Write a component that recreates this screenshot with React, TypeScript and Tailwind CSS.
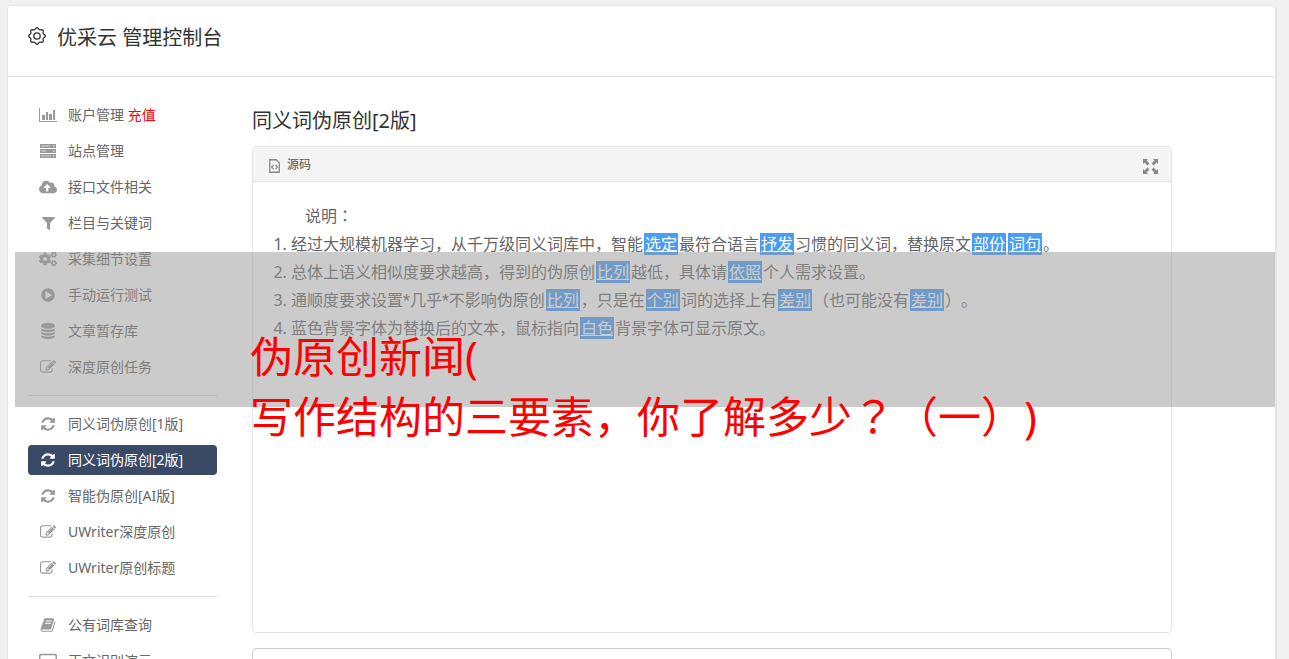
import type { ReactNode } from "react";
import { FaCloudUploadAlt, FaCogs, FaFilter, FaPlayCircle } from "react-icons/fa";

function Glyph({ d }: { d: string }) {
  return (
    <svg viewBox="0 0 1792 1792" className="size-4" fill="currentColor" aria-hidden="true">
      <path d={d} />
    </svg>
  );
}

const refresh = (
  <Glyph d="M1639 1056q0 5-1 7-64 268-268 434.5t-478 166.5q-146 0-282.5-55t-243.5-157l-129 129q-19 19-45 19t-45-19-19-45v-448q0-26 19-45t45-19h448q26 0 45 19t19 45-19 45l-137 137q71 66 161 102t187 36q134 0 250-65t186-179q11-17 53-117 8-23 30-23h192q13 0 22.5 9.5t9.5 22.5zm25-800v448q0 26-19 45t-45 19h-448q-26 0-45-19t-19-45 19-45l138-138q-148-137-349-137-134 0-250 65t-186 179q-11 17-53 117-8 23-30 23h-199q-13 0-22.5-9.5t-9.5-22.5v-7q65-268 270-434.5t480-166.5q146 0 284 55.5t245 156.5l130-129q19-19 45-19t45 19 19 45z" />
);

const edit = (
  <Glyph d="M888 1184l116-116-152-152-116 116v56h96v96h56zm440-720q-16-16-33 1l-350 350q-17 17-1 33t33-1l350-350q17-17 1-33zm80 594v190q0 119-84.5 203.5t-203.5 84.5h-832q-119 0-203.5-84.5t-84.5-203.5v-832q0-119 84.5-203.5t203.5-84.5h832q63 0 117 25 15 7 18 23 3 17-9 29l-49 49q-14 14-32 8-23-6-45-6h-832q-66 0-113 47t-47 113v832q0 66 47 113t113 47h832q66 0 113-47t47-113v-126q0-13 9-22l64-64q15-15 35-7t20 29zm-96-738l288 288-672 672h-288v-288zm444 132l-92 92-288-288 92-92q28-28 68-28t68 28l152 152q28 28 28 68t-28 68z" />
);

const database = (
  <Glyph d="M896 768q237 0 443-43t325-127v170q0 69-103 128t-280 93.5-385 34.5-385-34.5-280-93.5-103-128v-170q119 84 325 127t443 43zm0 768q237 0 443-43t325-127v170q0 69-103 128t-280 93.5-385 34.5-385-34.5-280-93.5-103-128v-170q119 84 325 127t443 43zm0-384q237 0 443-43t325-127v170q0 69-103 128t-280 93.5-385 34.5-385-34.5-280-93.5-103-128v-170q119 84 325 127t443 43zm0-1152q208 0 385 34.5t280 93.5 103 128v128q0 69-103 128t-280 93.5-385 34.5-385-34.5-280-93.5-103-128v-128q0-69 103-128t280-93.5 385-34.5z" />
);

const book = (
  <Glyph d="M1703 478q40 57 18 129l-275 906q-19 64-76.5 107.5t-122.5 43.5h-923q-77 0-148.5-53.5t-99.5-131.5q-24-67-2-127 0-4 3-27t4-37q1-8-3-21.5t-3-19.5q2-11 8-21t16.5-23.5 16.5-23.5q23-38 45-91.5t30-91.5q3-10 .5-30t-.5-28q3-11 17-28t17-23q21-36 42-92t25-90q1-9-2.5-32t.5-28q4-13 22-30.5t22-22.5q19-26 42.5-84.5t27.5-96.5q1-8-3-25.5t-2-26.5q2-8 9-18t18-23 17-21q8-12 16.5-30.5t15-35 16-36 19.5-32 26.5-23.5 36-11.5 47.5 5.5l-1 3q38-9 51-9h761q74 0 114 56t18 130l-274 906q-36 119-71.5 153.5t-128.5 34.5h-869q-27 0-38 15-11 16-1 43 24 70 144 70h923q29 0 56-15.5t35-41.5l300-987q7-22 5-57 38 15 59 43zm-1064 2q-4 13 2 22.5t20 9.5h608q13 0 25.5-9.5t16.5-22.5l21-64q4-13-2-22.5t-20-9.5h-608q-13 0-25.5 9.5t-16.5 22.5zm-83 256q-4 13 2 22.5t20 9.5h608q13 0 25.5-9.5t16.5-22.5l21-64q4-13-2-22.5t-20-9.5h-608q-13 0-25.5 9.5t-16.5 22.5z" />
);

const chart = (
  <svg viewBox="0 0 18 16" className="h-4 w-[18px]" fill="currentColor" aria-hidden="true">
    <path d="M0 1h1v13h17v1H0zM3 8h3v5H3zM7 5h2v8H7zM10 7h3v6h-3zM14 3h2v10h-2z" />
  </svg>
);

const server = (
  <svg viewBox="0 0 16 14" className="h-[14px] w-4" aria-hidden="true">
    <path d="M0 0h16v4H0zM0 5h16v4H0zM0 10h16v4H0z" fill="currentColor" />
    <path d="M1 1.5h9v1H1zM1 6.5h5v1H1zM1 11.5h10v1H1z" fill="#d8d8d8" />
    <path d="M13 1.5h1.5v1H13zM13 6.5h1.5v1H13zM13 11.5h1.5v1H13z" fill="#fff" />
  </svg>
);

const screen = (
  <svg viewBox="0 0 18 16" className="h-4 w-[18px]" fill="none" stroke="currentColor" aria-hidden="true">
    <rect x="0.75" y="1.5" width="16.5" height="11" rx="1.2" strokeWidth="1.5" />
    <path d="M5 15h8" strokeWidth="1.5" />
  </svg>
);

// 八瓣齿轮轮廓
const gearPoints = Array.from({ length: 96 }, (_, i) => {
  const a = (i / 96) * Math.PI * 2;
  const r = 7.5 + 0.8 * Math.cos(8 * a);
  return `${(9 + r * Math.cos(a)).toFixed(2)},${(9 + r * Math.sin(a)).toFixed(2)}`;
}).join(" ");

type Item = { icon: ReactNode; label: string; extra?: string; active?: boolean };

const groups: Item[][] = [
  [
    { icon: chart, label: "账户管理", extra: "充值" },
    { icon: server, label: "站点管理" },
    { icon: <FaCloudUploadAlt className="size-[18px]" />, label: "接口文件相关" },
    { icon: <FaFilter className="size-[13px]" />, label: "栏目与关键词" },
    { icon: <FaCogs className="size-[18px]" />, label: "采集细节设置" },
    { icon: <FaPlayCircle className="size-[14px]" />, label: "手动运行测试" },
    { icon: database, label: "文章暂存库" },
    { icon: edit, label: "深度原创任务" },
  ],
  [
    { icon: refresh, label: "同义词伪原创[1版]" },
    { icon: refresh, label: "同义词伪原创[2版]", active: true },
    { icon: refresh, label: "智能伪原创[AI版]" },
    { icon: edit, label: "UWriter深度原创" },
    { icon: edit, label: "UWriter原创标题" },
  ],
  [
    { icon: book, label: "公有词库查询" },
    { icon: screen, label: "正文识别演示" },
  ],
];

function MenuItem({ icon, label, extra, active }: Item) {
  return (
    <li>
      <a
        href="#"
        className={
          active
            ? "flex h-[30px] items-center gap-[10px] rounded bg-[#3a4a66] pl-[10px] text-white"
            : "flex h-[30px] items-center gap-[10px] rounded pl-[10px] text-[#666]"
        }
      >
        <span className={active ? "flex w-5 justify-center" : "flex w-5 justify-center text-[#999]"}>
          {icon}
        </span>
        <span>
          {label}
          {extra && <span className="text-[#f00]"> {extra}</span>}
        </span>
      </a>
    </li>
  );
}

// 被替换的词
function Word({ children }: { children: ReactNode }) {
  return <span className="mx-px bg-[#4a9df5] px-px text-white underline">{children}</span>;
}

// 居中标点
function Centered({ children }: { children: ReactNode }) {
  return (
    <span lang="zh-TW" className="font-['Noto_Sans_CJK_TC',sans-serif] leading-none">
      {children}
    </span>
  );
}

export default function App() {
  return (
    <div className="h-screen overflow-hidden bg-[#f0f0f0] font-['Noto_Sans','Noto_Sans_CJK_SC',sans-serif] text-sm [text-spacing-trim:space-all]">
      <div className="relative mt-[5px] mr-3 ml-[7px] min-h-screen rounded-t border border-r-2 border-[#e5e5e5] bg-white">
        <header className="flex h-[71px] items-center gap-[11px] border-b border-[#e5e5e5] px-5 pb-[6px] text-[#333]">
          <svg viewBox="0 0 18 18" className="mb-1 size-[18px]" fill="none" stroke="currentColor" strokeWidth="1.3" aria-hidden="true">
            <polygon points={gearPoints} strokeLinejoin="round" />
            <circle cx="9" cy="9" r="3.2" />
          </svg>
          <h1 className="text-xl">优采云 管理控制台</h1>
        </header>

        <div className="flex gap-[35px] pt-[23px] pl-5">
          <nav className="w-[189px] shrink-0">
            {groups.map((items, i) => (
              <ul
                key={i}
                className={
                  i === 0
                    ? "flex flex-col gap-[6px]"
                    : "mt-[13px] flex flex-col gap-[6px] border-t border-[#ddd] pt-[13px]"
                }
              >
                {items.map((item) => (
                  <MenuItem key={item.label} {...item} />
                ))}
              </ul>
            ))}
          </nav>

          <main className="mr-[103px] min-w-0 flex-1 pt-[7px]">
            <h2 className="text-xl text-[#333]">同义词伪原创[2版]</h2>

            <section className="mt-[11px] rounded border border-[#e5e5e5]">
              <div className="flex h-[35px] items-center justify-between rounded-t border-b border-[#e5e5e5] bg-[#f4f4f4] pr-[13px] pl-4">
                <button type="button" className="flex items-center gap-[7px] pt-px text-xs text-[#555]">
                  <svg viewBox="0 0 11 14" className="mt-[3px] h-[14px] w-[11px]" fill="none" stroke="#888" aria-hidden="true">
                    <path d="M.75.75h6.5l3 3v9.5H.75z" strokeWidth="1.3" />
                    <path d="M4.6 5.8 2.6 8l2 2.2M6.4 5.8l2 2.2-2 2.2" strokeWidth="1.2" />
                  </svg>
                  源码
                </button>
                <button type="button" aria-label="全屏" className="mt-1 text-[#888]">
                  <svg viewBox="0 0 15 15" className="size-[15px]" fill="currentColor" aria-hidden="true">
                    <path d="M0 0h5L3.6 1.6 6.4 4.4 4.4 6.4 1.6 3.6 0 5zM15 0v5l-1.6-1.4L10.6 6.4 8.6 4.4l2.8-2.8L10 0zM0 15v-5l1.6 1.4 2.8-2.8 2 2-2.8 2.8L5 15zM15 15h-5l1.4-1.6-2.8-2.8 2-2 2.8 2.8L15 10z" />
                  </svg>
                </button>
              </div>
              <div className="min-h-[450px] p-5 text-base leading-7 text-[#666]">
                <p className="indent-8">
                  说明<Centered>：</Centered>
                </p>
                <ol className="list-decimal pl-[18px]">
                  <li>
                    经过大规模机器学习，从千万级同义词库中，智能<Word>选定</Word>最符合语言
                    <Word>抒发</Word>习惯的同义词，替换原文<Word>部份</Word>
                    <Word>词句</Word>。
                  </li>
                  <li>
                    总体上语义相似度要求越高，得到的伪原创<Word>比列</Word>越低，具体请
                    <Word>依照</Word>个人需求设置。
                  </li>
                  <li>
                    通顺度要求设置
                    <span className="font-[Roboto,'Noto_Sans_CJK_SC',sans-serif] leading-none">*几乎*</span>
                    不影响伪原创<Word>比列</Word>，只是在<Word>个别</Word>词的选择上有
                    <Word>差别</Word>（也可能没有<Word>差别</Word>）。
                  </li>
                  <li>
                    蓝色背景字体为替换后的文本，鼠标指向<Word>白色</Word>背景字体可显示原文。
                  </li>
                </ol>
              </div>
            </section>

            <textarea
              aria-label="内容"
              className="mt-[15px] block h-40 w-full resize-none rounded border border-[#ccc] bg-white"
            />
          </main>
        </div>

        {/* 标题横幅 */}
        <div className="absolute top-[246px] right-0 left-[7px] h-[155px] bg-[#979797]/50 pt-[75px] pl-[235px] text-[43px] leading-[60px] whitespace-nowrap text-[#f00]">
          <p>伪原创新闻(</p>
          <p>
            写作结构的三要素，你了解多少<Centered>？</Centered>（一）)
          </p>
        </div>
      </div>
    </div>
  );
}
